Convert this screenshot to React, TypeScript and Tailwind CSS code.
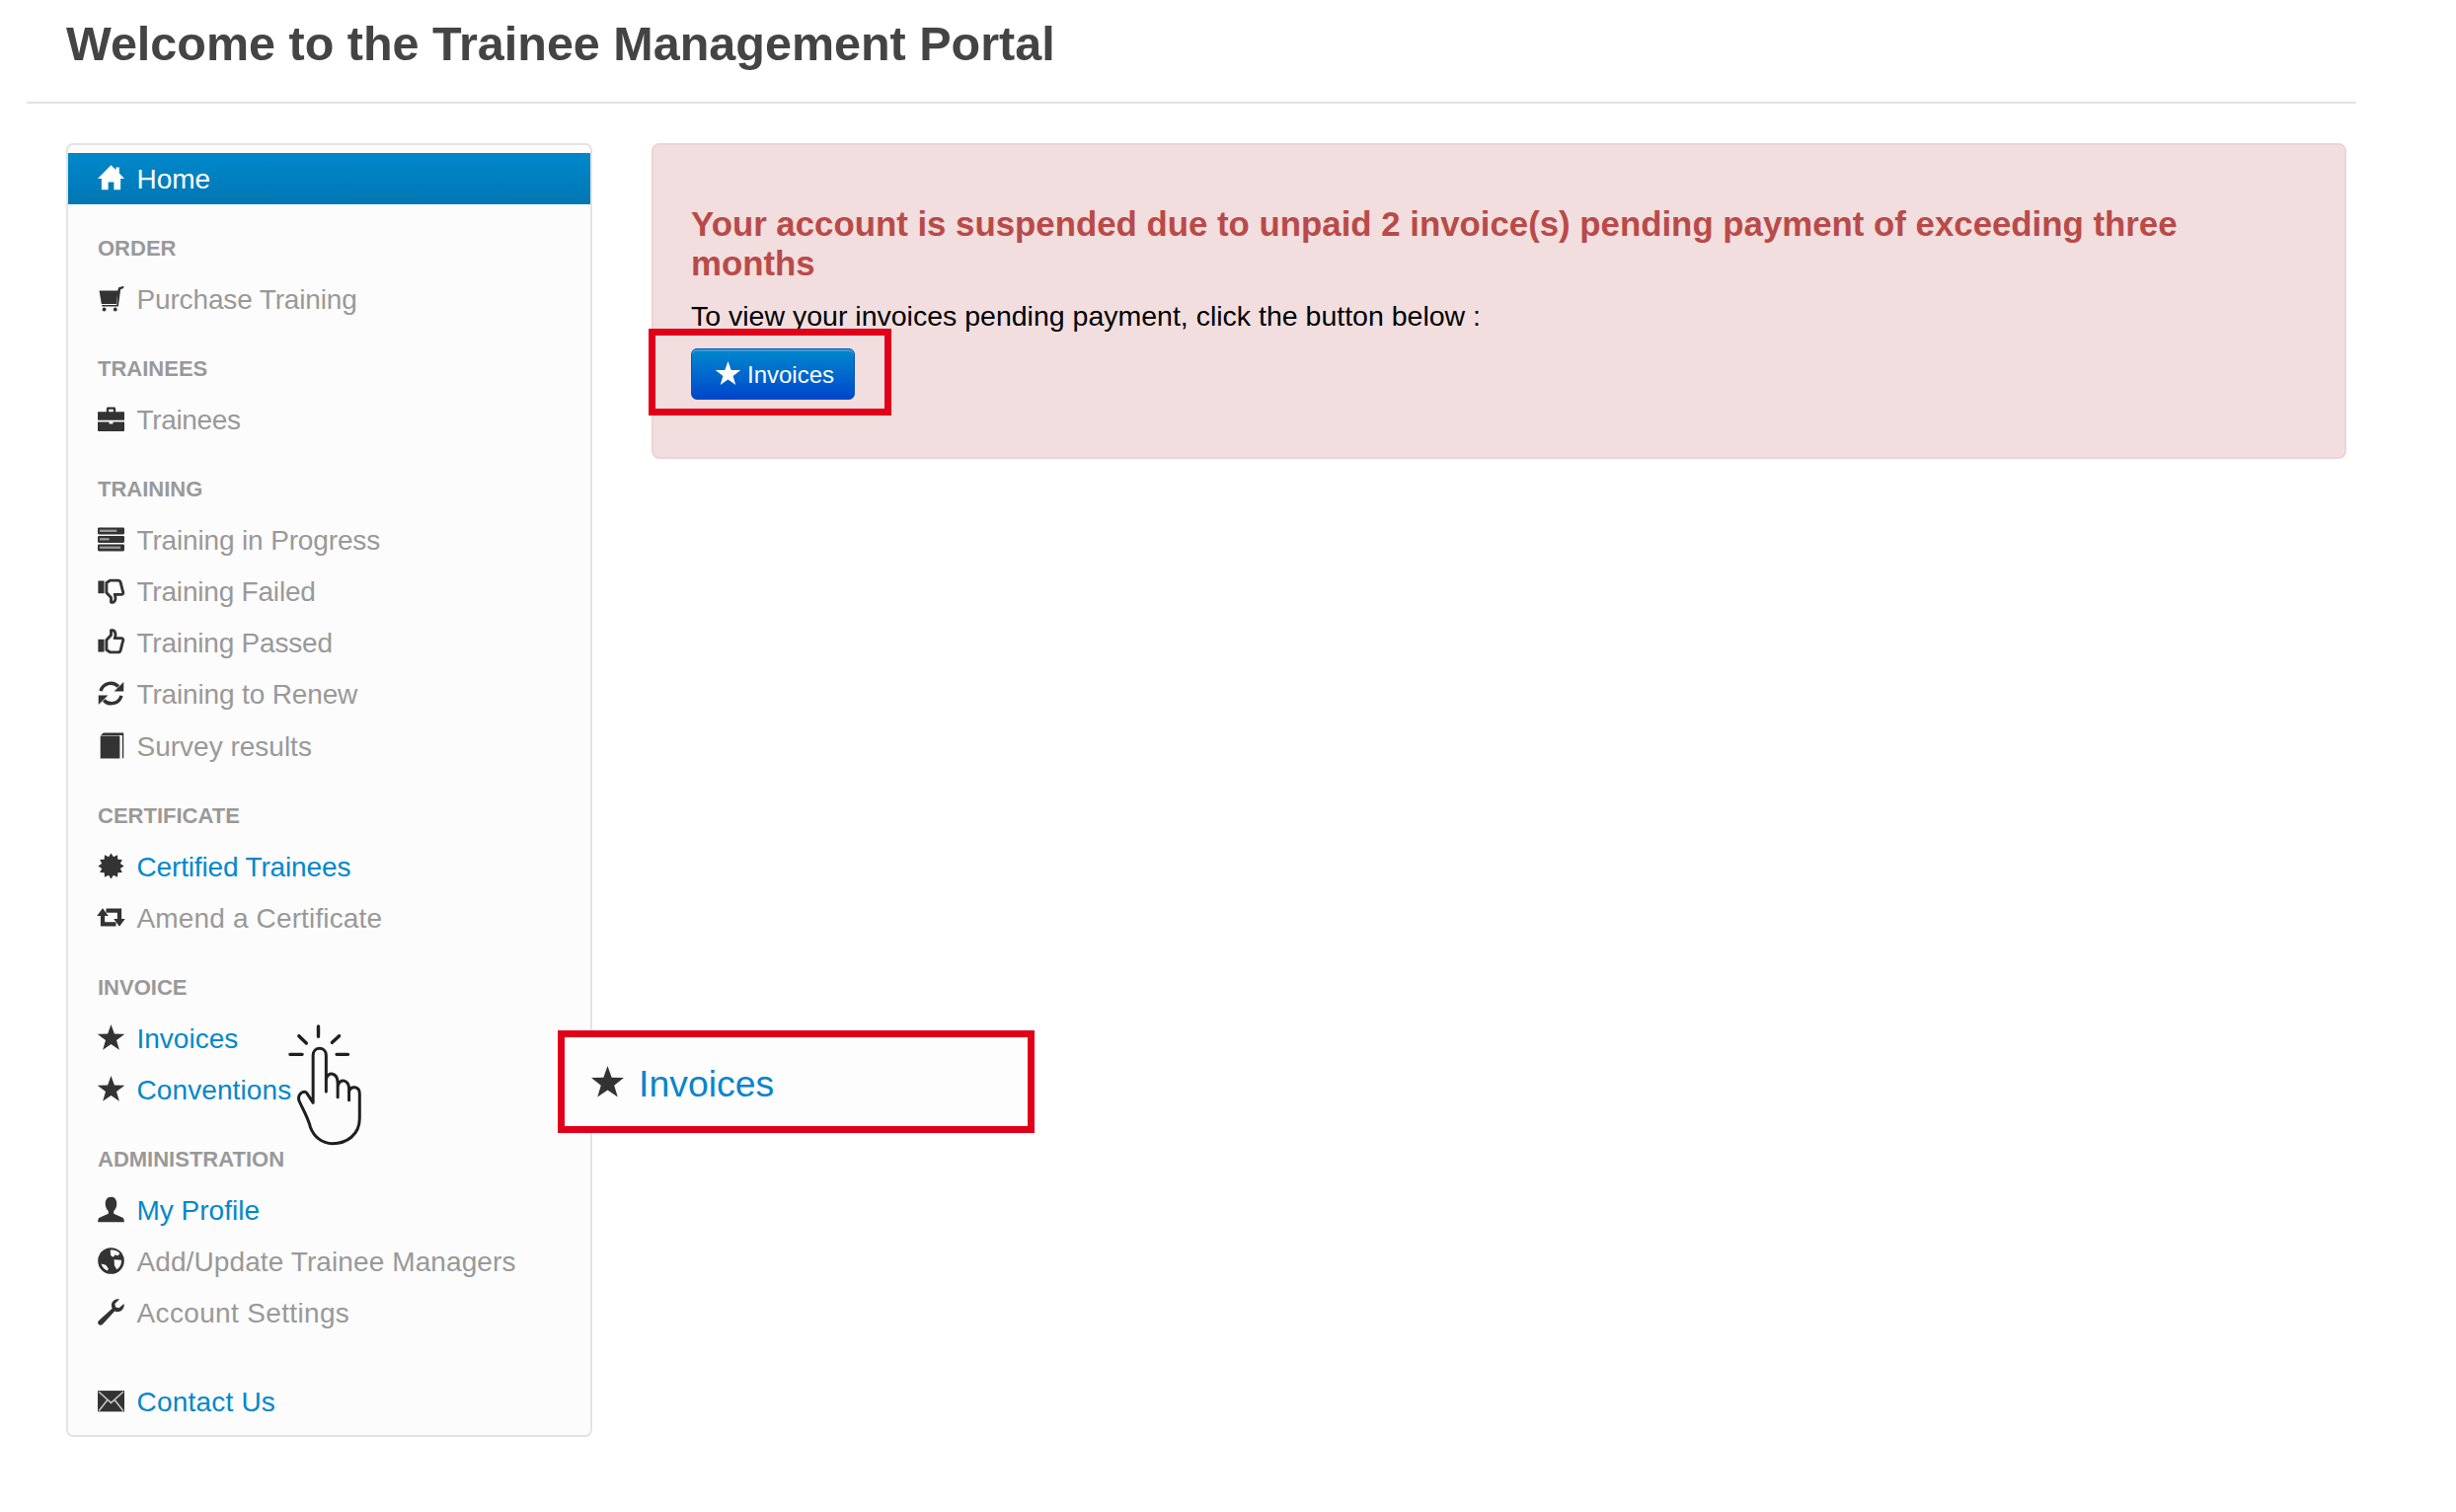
import React from 'react';

const DARK = '#333333';
const BG = '#fcfcfc';

const Icon = ({ children, className = '' }: { children: React.ReactNode; className?: string }) => (
    <svg viewBox="0 0 14 14" className={`w-[27px] h-[27px] shrink-0 overflow-visible ${className}`} fill={DARK}>
        {children}
    </svg>
);

const starPoints = (() => {
    const pts: string[] = [];
    for (let i = 0; i < 10; i++) {
        const r = i % 2 === 0 ? 7.4 : 3;
        const a = -Math.PI / 2 + (i * Math.PI) / 5;
        pts.push(`${(7 + r * Math.cos(a)).toFixed(2)},${(7.4 + r * Math.sin(a)).toFixed(2)}`);
    }
    return pts.join(' ');
})();

const burstPoints = (() => {
    const pts: string[] = [];
    for (let i = 0; i < 24; i++) {
        const r = i % 2 === 0 ? 6.8 : 5;
        const a = (i * Math.PI) / 12;
        pts.push(`${(7 + r * Math.cos(a)).toFixed(2)},${(7 + r * Math.sin(a)).toFixed(2)}`);
    }
    return pts.join(' ');
})();

const Star = ({ fill = DARK, className = 'w-[27px] h-[27px]' }: { fill?: string; className?: string }) => (
    <svg viewBox="0 0 14 14" className={`shrink-0 ${className}`} fill={fill}>
        <polygon points={starPoints} />
    </svg>
);

const HomeIcon = () => (
    <svg viewBox="0 0 14 14" className="w-[27px] h-[27px] shrink-0" fill="#ffffff">
        <path d="M7 0.6 L9.6 3.2 V1.8 H11.3 V4.9 L14 7.8 H12 V13.6 H8.5 V9.6 H5.5 V13.6 H2 V7.8 H0 Z" />
    </svg>
);

const CartIcon = () => (
    <Icon>
        <path d="M0.8 2.8 H10.6 L9.8 9.8 H2 Z" />
        <path d="M10.4 3 L11 1.2 L13.6 0.4 V1.5 L12 2.2 L10.8 11.2 H2.2 V10.4 H10 Z" />
        <circle cx="3.4" cy="12.7" r="1" />
        <circle cx="9.2" cy="12.7" r="1" />
    </Icon>
);

const BriefcaseIcon = () => (
    <Icon>
        <path fillRule="evenodd" d="M4.6 3.2 V1.6 C4.6 1.1 4.9 0.8 5.4 0.8 H8.6 C9.1 0.8 9.4 1.1 9.4 1.6 V3.2 H13.6 C14 3.2 14 3.5 14 3.8 V7.6 H0 V3.8 C0 3.5 0 3.2 0.4 3.2 Z M5.8 2 V3.2 H8.2 V2 Z" />
        <path d="M0 8.6 H6 V9.6 H8 V8.6 H14 V13 C14 13.3 13.8 13.5 13.5 13.5 H0.5 C0.2 13.5 0 13.3 0 13 Z" />
    </Icon>
);

const TasksIcon = () => (
    <Icon>
        <rect x="0" y="0.8" width="14" height="3.6" rx="0.6" />
        <rect x="0" y="5.2" width="14" height="3.6" rx="0.6" />
        <rect x="0" y="9.6" width="14" height="3.6" rx="0.6" />
        <rect x="1" y="1.9" width="9" height="1.2" fill="#9a9a9a" />
        <rect x="1" y="6.3" width="5" height="1.2" fill="#9a9a9a" />
        <rect x="1" y="10.7" width="11" height="1.2" fill="#9a9a9a" />
    </Icon>
);

const thumbOutline = 'M4.6 6 L7 3.4 V0.9 H8.1 C9.5 1.4 9.6 3.6 8.9 5 H12.4 C13.5 5 13.6 6 13.1 7 L12 11.3 C11.8 12 11.3 12.4 10.5 12.4 H6.6 L4.6 11.2 Z';

const ThumbUp = () => (
    <Icon>
        <rect x="0.2" y="5.6" width="3.2" height="6.6" />
        <path d={thumbOutline} fill="none" stroke={DARK} strokeWidth="1.5" strokeLinejoin="round" />
    </Icon>
);

const ThumbDown = () => (
    <Icon>
        <g transform="matrix(1 0 0 -1 0 14)">
            <rect x="0.2" y="5.6" width="3.2" height="6.6" />
            <path d={thumbOutline} fill="none" stroke={DARK} strokeWidth="1.5" strokeLinejoin="round" />
        </g>
    </Icon>
);

const RefreshIcon = () => (
    <Icon>
        <path d="M1.6 5.8 A5.4 5.4 0 0 1 10.8 3.4" fill="none" stroke={DARK} strokeWidth="1.8" />
        <polygon points="13.6,1 13.6,6 8.6,6" />
        <path d="M12.4 8.2 A5.4 5.4 0 0 1 3.2 10.6" fill="none" stroke={DARK} strokeWidth="1.8" />
        <polygon points="0.4,13 0.4,8 5.4,8" />
    </Icon>
);

const BookIcon = () => (
    <Icon>
        <path d="M1.6 1.6 L3 0.2 H13.6 V13.4 L12.9 13.9 V1.6 Z" />
        <rect x="1.4" y="1.8" width="10.2" height="12" rx="0.3" />
    </Icon>
);

const CertificateIcon = () => (
    <Icon>
        <polygon points={burstPoints} />
    </Icon>
);

const RetweetIcon = () => (
    <Icon>
        <path d="M4.4 3.4 H11.4 V8.4" fill="none" stroke={DARK} strokeWidth="2.2" />
        <polygon points="8.4,7.8 14.4,7.8 11.4,11.8" />
        <path d="M9.6 10.6 H2.6 V5.6" fill="none" stroke={DARK} strokeWidth="2.2" />
        <polygon points="-0.4,6.2 5.6,6.2 2.6,2.2" />
    </Icon>
);

const UserIcon = () => (
    <Icon>
        <path d="M7 0.4 C9.2 0.4 10 2.2 10 4 C10 5.6 9.3 7 8.4 7.8 V9.2 L12.8 11.1 C13.6 11.4 13.9 12 13.9 13.6 H0.1 C0.1 12 0.4 11.4 1.2 11.1 L5.6 9.2 V7.8 C4.7 7 4 5.6 4 4 C4 2.2 4.8 0.4 7 0.4 Z" />
    </Icon>
);

const GlobeIcon = () => (
    <Icon>
        <circle cx="7" cy="7" r="6.9" />
        <path d="M6.6 1.4 C8.4 1 10.4 1.6 11.6 3.2 L10.4 4.4 L9.2 3.8 L8.2 5 L6.8 4.2 Z" fill={BG} />
        <path d="M8.6 6.4 L12.4 6.6 C12.6 8.4 11.8 10.4 10 11.6 L8.8 9.4 Z" fill={BG} />
        <path d="M1.8 8.6 L4.2 9.2 L5.6 11 L5.2 12.2 C3.6 11.8 2.4 10.4 1.8 8.6 Z" fill={BG} />
    </Icon>
);

const WrenchIcon = () => (
    <Icon>
        <path d="M13.8 2.6 L11.2 4.8 L9.4 4.4 L9 2.6 L11.4 0.2 C9.4 -0.2 7.4 1 7.2 3.2 C7.2 4 7.3 4.6 7.6 5.1 L0.6 11.4 C-0.1 12.1 -0.1 12.9 0.5 13.5 C1.1 14.1 1.9 14 2.6 13.3 L8.9 6.5 C9.5 6.8 10.2 6.9 10.9 6.8 C12.9 6.5 14.2 4.6 13.8 2.6 Z" />
    </Icon>
);

const EnvelopeIcon = () => (
    <Icon>
        <rect x="0" y="1.6" width="14" height="11" />
        <path d="M0.6 2.2 L7 8 L13.4 2.2" fill="none" stroke="#c8c8c8" strokeWidth="0.8" />
        <path d="M0.6 12.2 L5 6.6 M13.4 12.2 L9 6.6" fill="none" stroke="#c8c8c8" strokeWidth="0.8" />
    </Icon>
);

const HandCursor = () => (
    <svg
        viewBox="630 165 238 390"
        preserveAspectRatio="none"
        className="absolute left-[285px] top-[1035px] w-[85px] h-[130px]"
        fill="none"
        stroke="#1f1f1f"
        strokeLinecap="round"
        strokeLinejoin="round"
    >
        <path vectorEffect="non-scaling-stroke" strokeWidth="3.4" d="M735 180 V211 M680 209 L701 231 M794 209 L774 229 M655 265 H689 M787 265 H819" />
        <path
            vectorEffect="non-scaling-stroke"
            strokeWidth="3"
            d="M720 412 V268 C720 240 757 240 757 268 V378 M757 340 C762 315 790 320 790 352 V395 M790 362 C795 335 822 342 822 370 V404 M822 378 C828 358 852 362 852 385 V460 C852 510 815 536 775 536 C745 536 722 515 712 485 C705 455 690 430 680 405 C675 385 695 372 702 382 L720 412"
        />
    </svg>
);

type Item = { label: string; icon: React.ReactNode; link?: boolean; spacing?: string };

const Row = ({ item }: { item: Item }) => (
    <div className="h-[52.2px] pl-[30px] flex items-center">
        <div className="w-[39.5px] -mt-[3px]">{item.icon}</div>
        <span className={`text-[28px] ${item.spacing ?? ''} ${item.link ? 'text-[#0088cc]' : 'text-[#999999]'}`}>{item.label}</span>
    </div>
);

const groups: { title: string; items: Item[] }[] = [
    { title: 'Order', items: [{ label: 'Purchase Training', icon: <CartIcon />, spacing: 'tracking-[-0.15px]' }] },
    { title: 'Trainees', items: [{ label: 'Trainees', icon: <BriefcaseIcon />, spacing: 'tracking-[-0.35px]' }] },
    {
        title: 'Training',
        items: [
            { label: 'Training in Progress', icon: <TasksIcon />, spacing: 'tracking-[-0.15px]' },
            { label: 'Training Failed', icon: <ThumbDown />, spacing: 'tracking-[-0.2px]' },
            { label: 'Training Passed', icon: <ThumbUp />, spacing: 'tracking-[-0.2px]' },
            { label: 'Training to Renew', icon: <RefreshIcon />, spacing: 'tracking-[-0.15px]' },
            { label: 'Survey results', icon: <BookIcon /> },
        ],
    },
    {
        title: 'Certificate',
        items: [
            { label: 'Certified Trainees', icon: <CertificateIcon />, link: true, spacing: 'tracking-[-0.15px]' },
            { label: 'Amend a Certificate', icon: <RetweetIcon />, spacing: 'tracking-[0.15px]' },
        ],
    },
    {
        title: 'Invoice',
        items: [
            { label: 'Invoices', icon: <Star />, link: true },
            { label: 'Conventions', icon: <Star />, link: true, spacing: 'tracking-[0.1px]' },
        ],
    },
    {
        title: 'Administration',
        items: [
            { label: 'My Profile', icon: <UserIcon />, link: true },
            { label: 'Add/Update Trainee Managers', icon: <GlobeIcon />, spacing: 'tracking-[0.1px]' },
            { label: 'Account Settings', icon: <WrenchIcon />, spacing: 'tracking-[0.35px]' },
        ],
    },
];

export default function App() {
    return (
        <div className="relative w-[2488px] h-[1532px] bg-white overflow-hidden [font-family:'Liberation_Sans',Arial,sans-serif]">
            {/* Title */}
            <div className="pl-[67px] h-[103px] pt-[17px]">
                <h1 className="text-[48.5px] leading-[55px] font-bold text-[#444444]">
                    Welcome to the Trainee Management Portal
                </h1>
            </div>
            <div className="ml-[27px] w-[2360px] h-[2px] bg-[#e3e3e3]" />

            <div className="flex items-start pl-[67px] pt-[40px] gap-[60px]">
                {/* Sidebar */}
                <div className="w-[533px] h-[1311px] border-2 border-[#e3e3e3] rounded-[7px] bg-[#fcfcfc] pt-[8px]">
                    <div className="h-[52px] pl-[30px] flex items-center bg-gradient-to-b from-[#0088cc] to-[#0077b3]">
                        <div className="w-[39.5px] -mt-[3px]"><HomeIcon /></div>
                        <span className="text-[28px] text-white pt-[2px]">Home</span>
                    </div>
                    <div className="pt-[1px]">
                        {groups.map((group) => (
                            <div key={group.title} className="mt-[17.6px]">
                                <div className="h-[52.2px] pl-[30px] flex items-center text-[22px] font-bold uppercase text-[#999999]">
                                    {group.title}
                                </div>
                                {group.items.map((item) => (
                                    <Row key={item.label} item={item} />
                                ))}
                            </div>
                        ))}
                    </div>
                    <div className="mt-[38px]">
                        <Row item={{ label: 'Contact Us', icon: <EnvelopeIcon />, link: true, spacing: 'tracking-[0.2px]' }} />
                    </div>
                </div>

                {/* Alert */}
                <div className="w-[1717px] h-[320px] border-2 border-[#eed3d7] rounded-[8px] bg-[#f2dede] pl-[38px] pt-[60px]">
                    <h4 className="text-[34.8px] leading-[40px] font-bold text-[#b94a48] w-[1560px]">
                        Your account is suspended due to unpaid 2 invoice(s) pending payment of exceeding three months
                    </h4>
                    <p className="mt-[13px] text-[28.5px] leading-[40px] text-black">
                        To view your invoices pending payment, click the button below :
                    </p>
                    <button className="mt-[13px] w-[166px] h-[52px] pl-[24px] flex items-center gap-[7px] rounded-[6px] bg-gradient-to-b from-[#0088cc] to-[#0044cc] border border-[#0a55bb] shadow-[inset_0_2px_0_rgba(255,255,255,0.2)] text-white text-[24px]">
                        <Star fill="#ffffff" className="w-[25px] h-[25px] -mt-[1px]" />
                        <span className="pt-[2px]">Invoices</span>
                    </button>
                </div>
            </div>

            {/* Red highlight around the button */}
            <div className="absolute left-[657px] top-[333px] w-[246px] h-[88px] border-[7px] border-[#e1001a]" />

            {/* Zoomed callout of the menu entry */}
            <div className="absolute left-[565px] top-[1044px] w-[483px] h-[104px] border-[7px] border-[#e1001a] bg-[#fdfdfd] flex items-center pl-[27px] gap-[15px]">
                <Star className="w-[33px] h-[33px] mt-[1px]" />
                <span className="text-[37.4px] text-[#0a84cc] pt-[4px]">Invoices</span>
            </div>

            <HandCursor />
        </div>
    );
}
